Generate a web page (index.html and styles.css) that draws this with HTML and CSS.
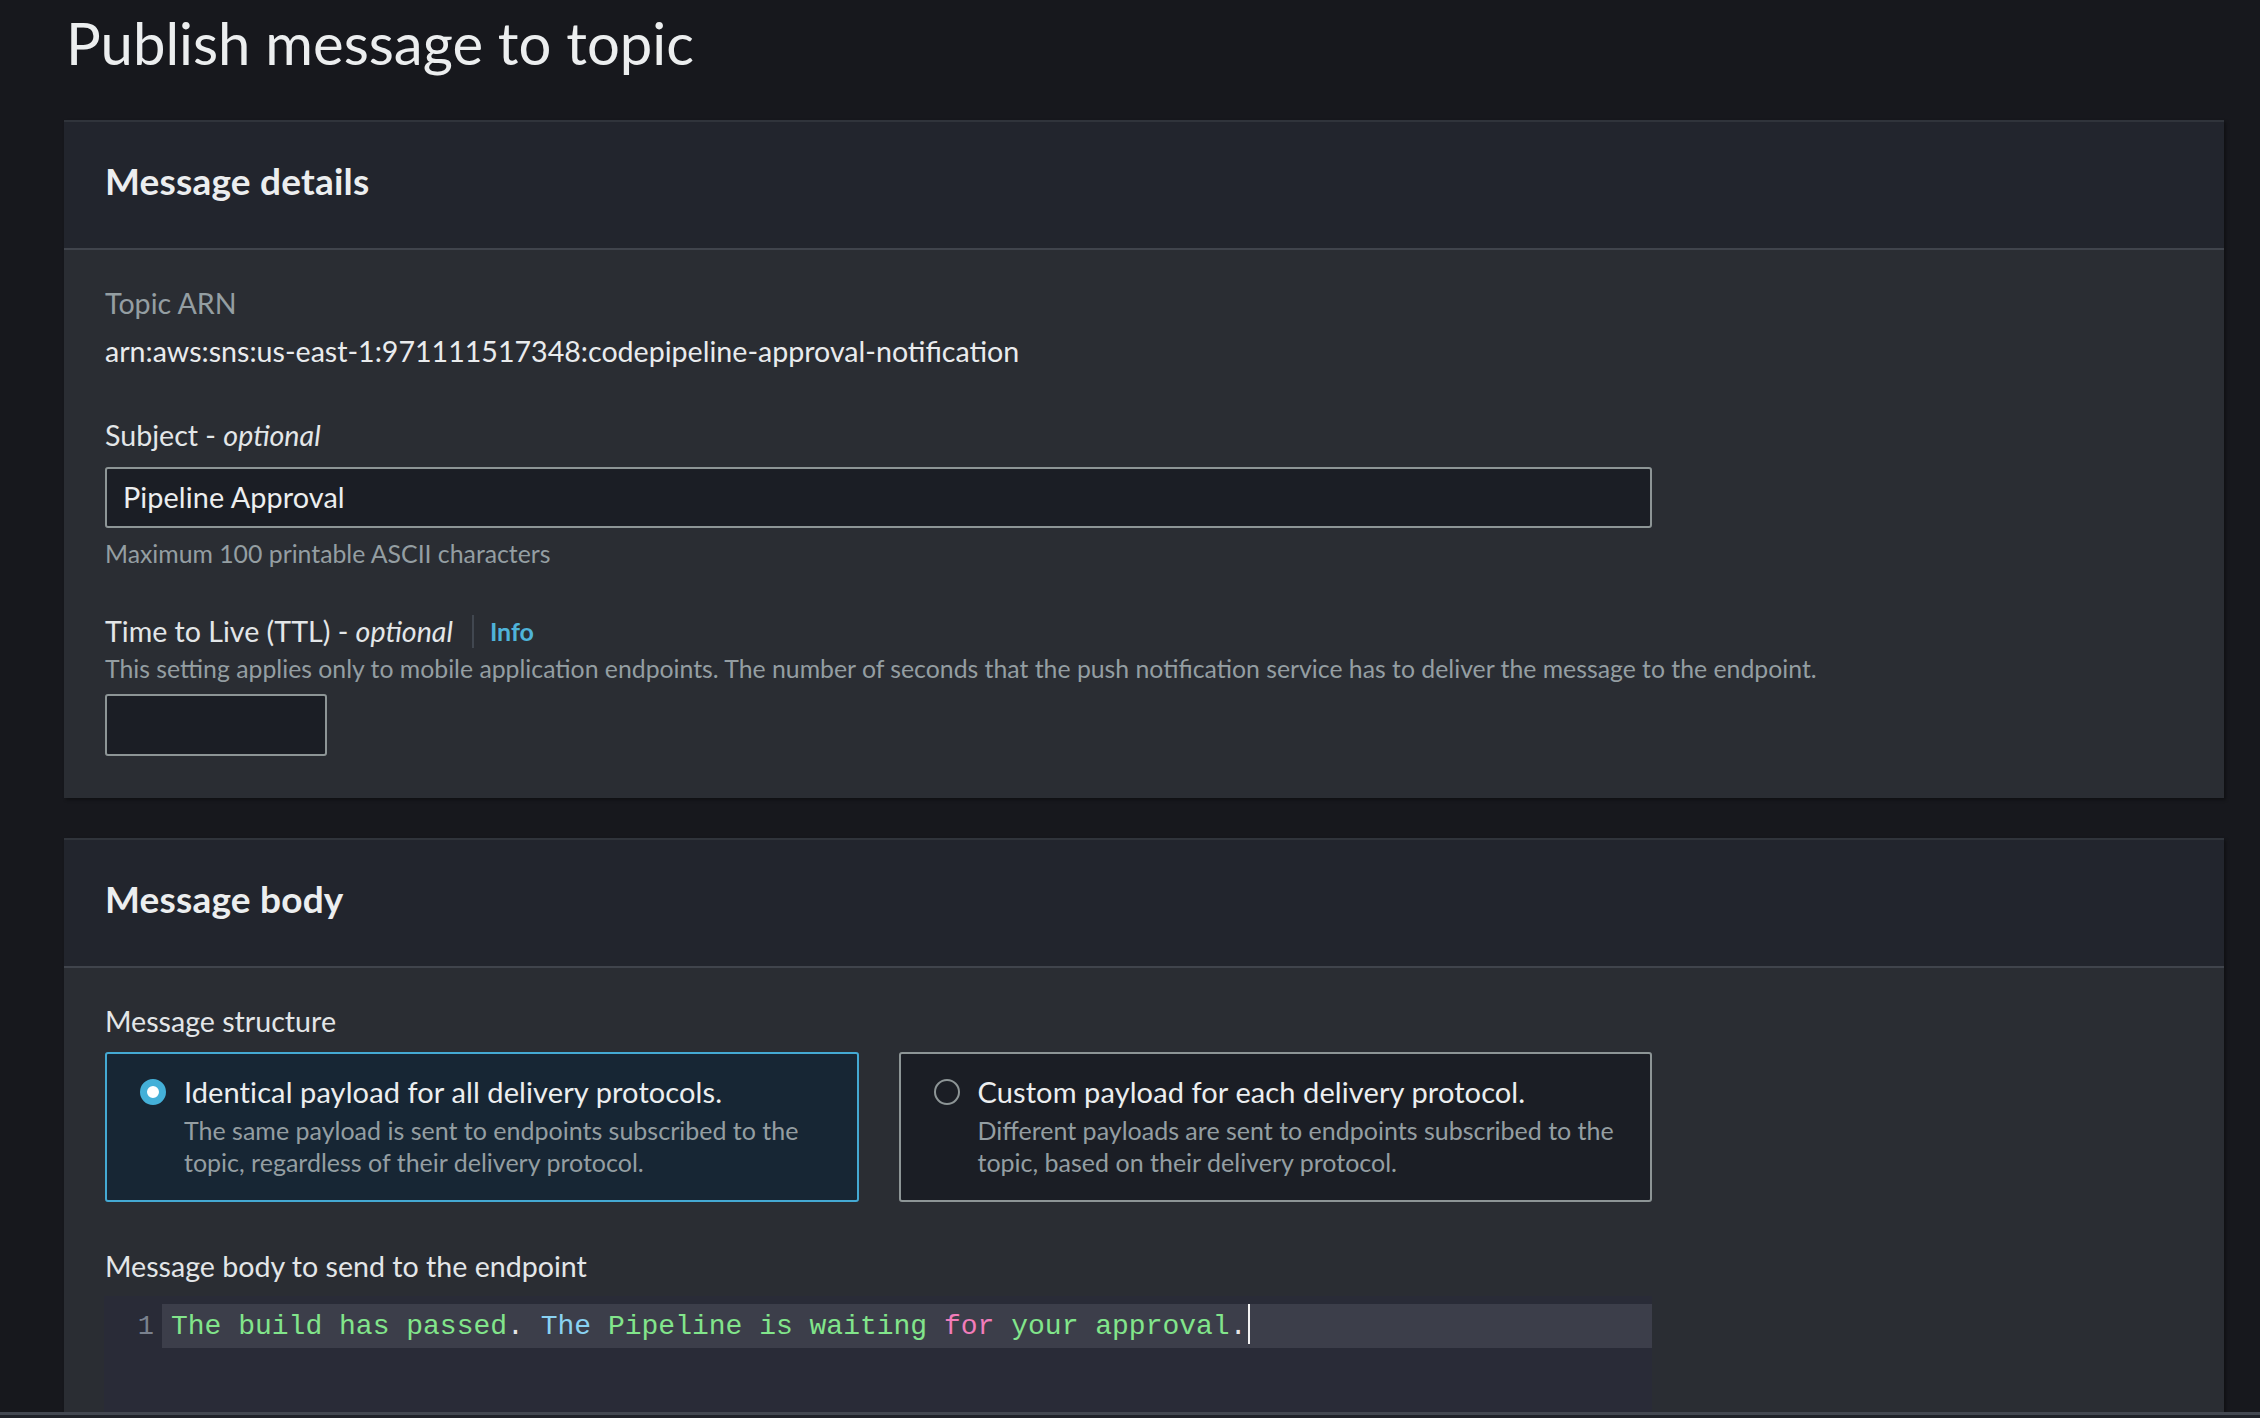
FILE: index.html
```html
<!DOCTYPE html>
<html lang="en">
<head>
<meta charset="utf-8">
<title>Publish message to topic</title>
<link rel="stylesheet" href="styles.css">
</head>
<body>
<main class="page">
  <h1 class="page-title">Publish message to topic</h1>

  <section class="panel">
    <header class="panel-header"><h2>Message details</h2></header>
    <div class="panel-body details-body">
      <div class="label muted">Topic ARN</div>
      <div class="value arn">arn:aws:sns:us-east-1:971111517348:codepipeline-approval-notification</div>

      <div class="label subject-label">Subject - <em>optional</em></div>
      <div class="input subject-input">Pipeline Approval</div>
      <div class="hint">Maximum 100 printable ASCII characters</div>

      <div class="label ttl-label">
        <span>Time to Live (TTL) - <em>optional</em></span>
        <span class="sep"></span>
        <a class="info">Info</a>
      </div>
      <div class="hint ttl-desc">This setting applies only to mobile application endpoints. The number of seconds that the push notification service has to deliver the message to the endpoint.</div>
      <div class="input ttl-input"></div>
    </div>
  </section>

  <section class="panel panel-second">
    <header class="panel-header"><h2>Message body</h2></header>
    <div class="panel-body body-body">
      <div class="label">Message structure</div>
      <div class="cards">
        <div class="card selected">
          <span class="radio checked"></span>
          <div class="card-text">
            <div class="card-title">Identical payload for all delivery protocols.</div>
            <div class="card-desc">The same payload is sent to endpoints subscribed to the topic, regardless of their delivery protocol.</div>
          </div>
        </div>
        <div class="card">
          <span class="radio"></span>
          <div class="card-text">
            <div class="card-title">Custom payload for each delivery protocol.</div>
            <div class="card-desc">Different payloads are sent to endpoints subscribed to the topic, based on their delivery protocol.</div>
          </div>
        </div>
      </div>

      <div class="label endpoint-label">Message body to send to the endpoint</div>
      <div class="editor">
        <div class="editor-line">
          <span class="gutter">1</span>
          <span class="code"><span class="c-green">The build has passed</span><span class="c-plain">.</span> <span class="c-blue">The</span> <span class="c-green">Pipeline is waiting</span> <span class="c-pink">for</span> <span class="c-green">your approval</span><span class="c-plain">.</span><span class="cursor"></span></span>
        </div>
      </div>
    </div>
  </section>
</main>
<div class="bottom-bar"></div>
</body>
</html>
```
FILE: styles.css
```css
* { box-sizing: border-box; }

html, body {
  margin: 0;
  padding: 0;
  background: #17181d;
}

body {
  font-family: "Lato", "Open Sans", sans-serif;
  color: #e9ebed;
  overflow: hidden;
  height: 1418px;
}

.page {
  padding: 8px 36px 0 64px;
}

.page-title {
  margin: 0;
  font-size: 58px;
  font-weight: 400;
  line-height: 70px;
  color: #eceeef;
  padding-left: 2px;
}

.panel {
  margin-top: 42px;
  background: #2a2d33;
  border-top: 2px solid #30343b;
  box-shadow: 2px 2px 3px rgba(0, 0, 0, 0.35);
}

.panel-second {
  margin-top: 40px;
}

.panel-header {
  background: #22252d;
  padding: 37px 41px 45px;
  border-bottom: 2px solid #40444c;
}

.panel-header h2 {
  margin: 0;
  font-size: 37px;
  line-height: 44px;
  font-weight: 700;
  letter-spacing: 0.2px;
  color: #eceeef;
}

.panel-body {
  padding: 35px 41px 42px;
}

.label {
  font-size: 28.6px;
  line-height: 36px;
  color: #e3e6e8;
}

.label em {
  font-style: italic;
}

.muted {
  color: #949ea2;
}

.value {
  font-size: 28.6px;
  line-height: 36px;
  margin-top: 12px;
  color: #e9ebed;
}

.subject-label {
  margin-top: 48px;
}

.input {
  background: #1b1e25;
  border: 2px solid #8d9596;
  border-radius: 3px;
}

.subject-input {
  margin-top: 14px;
  width: 1547px;
  padding: 10px 16px 11px;
  font-size: 28.8px;
  line-height: 36px;
  letter-spacing: 0.1px;
  color: #eceeef;
}

.hint {
  margin-top: 10px;
  font-size: 24.8px;
  line-height: 32px;
  color: #949ea2;
}

.ttl-label {
  margin-top: 43px;
  display: flex;
  align-items: center;
}

.sep {
  display: inline-block;
  width: 2px;
  height: 33px;
  background: #414750;
  margin: 0 16px 0 19px;
}

.info {
  font-size: 25px;
  font-weight: 700;
  color: #4fb3d9;
}

.ttl-desc {
  margin-top: 4px;
}

.ttl-input {
  margin-top: 9px;
  width: 222px;
  height: 62px;
}

/* Message body panel */
.cards {
  margin-top: 13px;
  width: 1547px;
  display: grid;
  grid-template-columns: 1fr 1fr;
  gap: 40px;
}

.card {
  display: flex;
  gap: 18px;
  background: #1b1e25;
  border: 2px solid #8d9596;
  border-radius: 3px;
  padding: 20px 28px 22px 33px;
  height: 150px;
}

.card.selected {
  background: #172634;
  border-color: #44a9d3;
}

.radio {
  flex: none;
  width: 26px;
  height: 26px;
  margin-top: 5px;
  border-radius: 50%;
  border: 2px solid #8d9596;
}

.radio.checked {
  border: 7px solid #44b0d8;
  background: #ffffff;
}

.card-title {
  font-size: 29px;
  line-height: 36px;
  letter-spacing: 0.1px;
  color: #eceeef;
}

.card-desc {
  margin-top: 4px;
  font-size: 25px;
  line-height: 32px;
  color: #949ea2;
}

.endpoint-label {
  margin-top: 46px;
}

.editor {
  margin-top: 12px;
  width: 1548px;
  margin-left: -1px;
  height: 220px;
  background: #292b37;
  padding-top: 8px;
}

.editor-line {
  display: flex;
  align-items: baseline;
  height: 44px;
}

.gutter {
  flex: none;
  width: 58px;
  padding-right: 8px;
  text-align: right;
  font-family: "Liberation Mono", monospace;
  font-size: 27px;
  color: #7a818e;
}

.code {
  flex: 1;
  height: 44px;
  background: #3c3e4a;
  padding-left: 9px;
  font-family: "Liberation Mono", monospace;
  font-size: 28px;
  line-height: 44px;
  white-space: pre;
}

.c-green { color: #82e58b; }
.c-blue { color: #8ad2f2; }
.c-pink { color: #f27cba; }
.c-plain { color: #e6e6e6; }

.cursor {
  display: inline-block;
  width: 2px;
  height: 40px;
  background: #f2f2f2;
  vertical-align: -10px;
  margin-left: 2px;
}

.bottom-bar {
  position: fixed;
  left: 0;
  right: 0;
  bottom: 0;
  height: 6px;
  border-top: 3px solid #434851;
  background: #1f2229;
}
```
